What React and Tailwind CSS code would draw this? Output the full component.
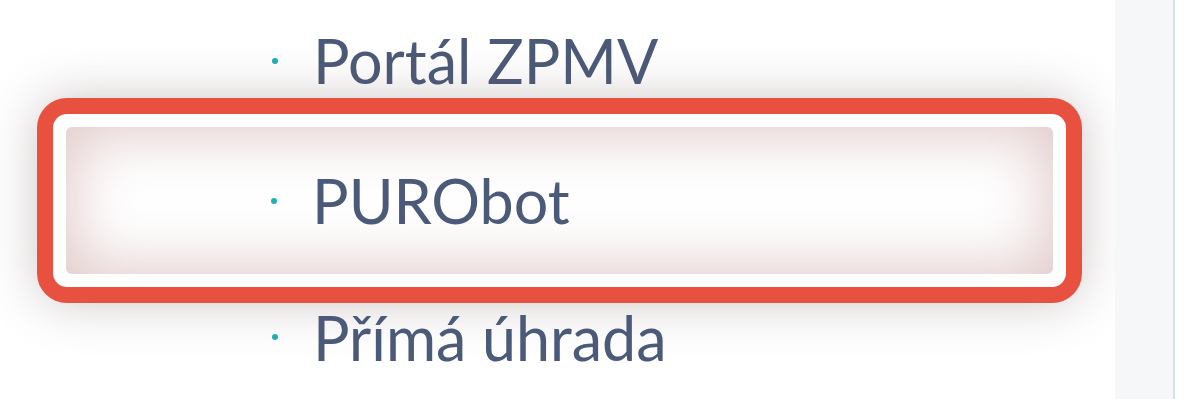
export default function App() {
  const text = "text-[61px] leading-none text-[#4b5a78]";
  const dot = "w-[6px] h-[6px] rounded-full bg-[#1fb1b5] shrink-0";

  return (
    <div
      className="flex h-[399px] w-[1200px] bg-white overflow-hidden"
      style={{ fontFamily: 'Lato, "Noto Sans", sans-serif' }}
    >
      {/* menu column */}
      <div className="flex-1 flex flex-col pt-[23px]">
        <div className="h-[75px] flex items-center pl-[272px]">
          <span className={dot} />
          <span className={`${text} ml-[35px]`}>Portál ZPMV</span>
        </div>

        {/* highlighted item */}
        <div className="ml-[37px] mr-[33px] h-[205px] rounded-[30px] border-[16px] border-[#e8503f] bg-white p-[13px] shadow-[0_0_50px_rgba(110,80,80,0.32)]">
          <div className="h-full rounded-[6px] bg-white flex items-center pl-[205px] shadow-[inset_0_0_60px_8px_rgba(175,115,115,0.38)]">
            <span className={dot} />
            <span className={`${text} ml-[35px]`}>PURObot</span>
          </div>
        </div>

        <div className="h-[68px] flex items-center pl-[272px]">
          <span className={dot} />
          <span className={`${text} ml-[35px]`}>Přímá úhrada</span>
        </div>
      </div>

      {/* right strip */}
      <div className="w-[60px] bg-[#f5f7f9] border-r-[2px] border-[#d6e2e3]" />
      <div className="w-[25px]" />
    </div>
  );
}
